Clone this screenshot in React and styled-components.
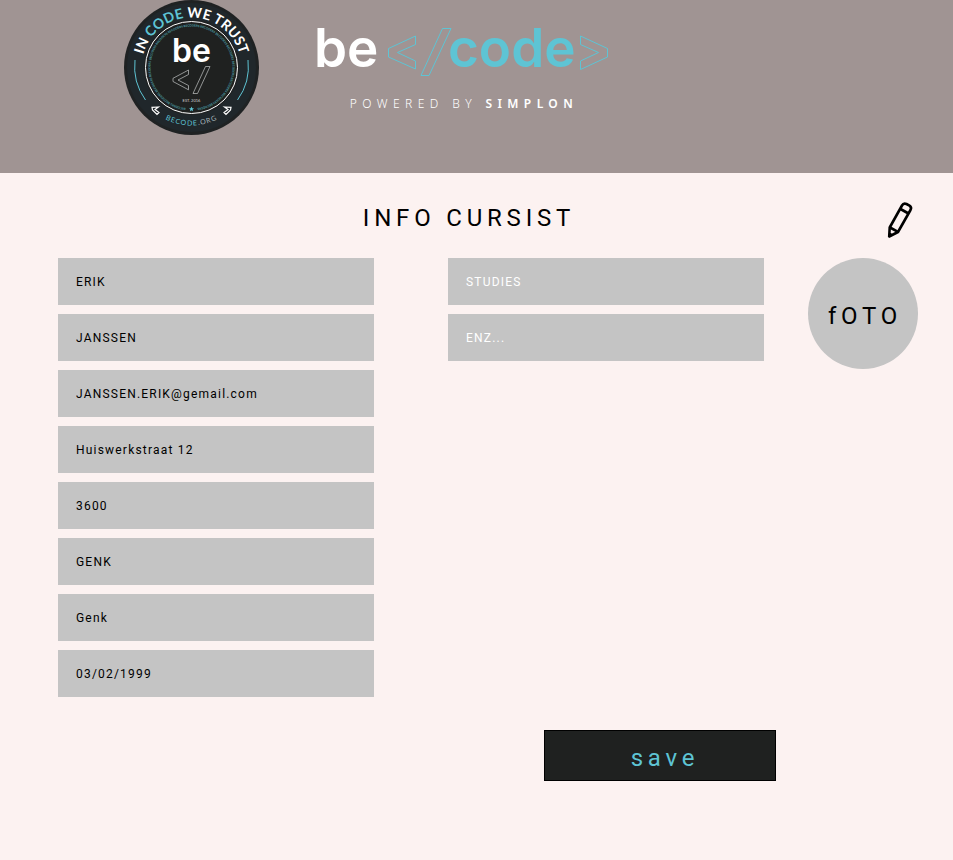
import React from "react";
import styled, { createGlobalStyle } from "styled-components";

const GlobalStyle = createGlobalStyle`
  *, *::before, *::after { box-sizing: border-box; }
  body {
    margin: 0;
    background: #fcf2f1;
    color: #000;
    font-family: Roboto, "Liberation Sans", sans-serif;
  }
`;

const teal = "#5ec4d4";
const ink = "#1f2120";

const Header = styled.header`
  display: flex;
  align-items: flex-start;
  gap: 57px;
  padding: 0 124px 38px;
  background: #a09493;
`;

const BadgeArt = styled.svg`
  display: block;
  flex: none;
  width: 135px;
  height: 135px;
  font-family: Lato, sans-serif;
`;

const Brand = styled.div`
  display: flex;
  flex-direction: column;
  align-items: center;
  padding-top: 14px;
`;

const WordmarkArt = styled.svg`
  display: block;
  width: 294px;
  height: 68px;
  font-family: Inter, sans-serif;
`;

const Tagline = styled.p`
  margin: 12px 0 0;
  padding-left: 2px;
  color: #fff;
  font-family: "Noto Sans", sans-serif;
  font-size: 12px;
  font-weight: 300;
  line-height: 20px;
  letter-spacing: 0.45em;
  white-space: nowrap;

  strong { font-weight: 600; }
`;

const Main = styled.main`
  padding: 28px 35px 79px 58px;
`;

const TitleRow = styled.div`
  display: flex;
  align-items: flex-start;
  gap: 6px;
`;

const Title = styled.h1`
  flex: 1;
  margin: 0;
  font-size: 24px;
  font-weight: 400;
  line-height: 34px;
  letter-spacing: 0.2em;
  text-align: center;
`;

const IconButton = styled.button`
  display: block;
  padding: 0;
  border: 0;
  background: none;
  cursor: pointer;

  svg { display: block; }
`;

const Form = styled.form`
  margin-top: 19px;
`;

const FormBody = styled.div`
  display: flex;
  align-items: flex-start;
  gap: 44px;
`;

const Columns = styled.div`
  flex: 1;
  display: grid;
  grid-template-columns: repeat(2, minmax(0, 1fr));
  align-items: start;
  gap: 74px;
`;

const Column = styled.div`
  display: grid;
  gap: 9px;
`;

const Field = styled.input`
  width: 100%;
  height: 47px;
  padding: 0 18px;
  border: 0;
  border-radius: 0;
  background: #c4c4c4;
  color: #000;
  font-family: inherit;
  font-size: 12px;
  letter-spacing: 0.1em;

  &::placeholder { color: #fff; opacity: 1; }
`;

const Photo = styled.button`
  flex: none;
  width: 110px;
  height: 111px;
  padding: 4px 0 0 4px;
  border: 0;
  border-radius: 50%;
  background: #c4c4c4;
  color: #000;
  font-family: inherit;
  font-size: 24px;
  letter-spacing: 0.2em;
  cursor: pointer;
`;

const Actions = styled.div`
  display: flex;
  justify-content: flex-end;
  margin-top: 33px;
  padding-right: 142px;
`;

const SaveButton = styled.button`
  width: 232px;
  height: 51px;
  padding: 4px 0 0 10px;
  border: 1px solid #000;
  background: ${ink};
  color: ${teal};
  font-family: inherit;
  font-size: 24px;
  letter-spacing: 0.2em;
  cursor: pointer;
`;

function Badge() {
  return (
    <BadgeArt viewBox="0 0 135 135" role="img" aria-label="BeCode badge">
      <defs>
        <path id="arcTop" d="M17.5 67.5a50 50 0 0 1 100 0" />
        <path id="arcBottom" d="M9.5 67.5a58 58 0 0 0 116 0" />
        <path id="arcRing" d="M67.5 108.5a41 41 0 0 1 0 -82a41 41 0 0 1 0 82" />
      </defs>
      <circle cx="67.5" cy="67.5" r="67.5" fill="#1f2223" />
      <circle cx="67.5" cy="67.5" r="56" fill="none" stroke="#20272b" strokeWidth="17" />
      <circle cx="67.5" cy="67.5" r="46" fill={ink} stroke="#fff" strokeWidth="1" />
      <text fontSize="14" fontWeight="700" fill="#fff" textAnchor="middle">
        <textPath href="#arcTop" startOffset="50%">
          IN <tspan fill={teal}>CODE</tspan> WE TRUST
        </textPath>
      </text>
      <text fontSize="3" fontWeight="700" fill={teal} opacity="0.75" textAnchor="middle">
        <textPath href="#arcRing" startOffset="50%">
          {Array(15).fill("BECODERS").join(" ")}
        </textPath>
      </text>
      <g fill="none" stroke={teal} strokeWidth="1">
        <path d="M11 60A57 57 0 0 0 21.5 100" />
        <path d="M124 60A57 57 0 0 1 113.5 100" />
      </g>
      <text x="67.5" y="62" fontFamily="Inter" fontSize="32" fontWeight="600" fill="#fff" textAnchor="middle">be</text>
      <g fill="none" stroke="#c3c5c5" strokeWidth="0.7">
        <path d="M64.500 70L49 78.300V81.500L64.500 89.800V85.500L54 80L64.500 74.500Z" />
        <path d="M81.500 66.500H86L73.500 93.500H69Z" />
      </g>
      <text x="67.5" y="101.500" fontSize="4" fill="#d5d5d5" textAnchor="middle">EST. 2016</text>
      <path d="M67.500 106.500L68.200 108.200L70 108.300L68.600 109.500L69.100 111.300L67.500 110.300L65.900 111.300L66.400 109.500L65 108.300L66.800 108.200Z" fill={teal} />
      <g fill="none" stroke="#fff" strokeWidth="1.200">
        <path d="M34.500 107L28 107.300L28.500 110L33 114.500L35 112.500L31 109.500Z" />
        <path d="M100.500 107L107 107.300L106.500 110L102 114.500L100 112.500L104 109.500Z" />
      </g>
      <text fontSize="7" fill={teal} textAnchor="middle" letterSpacing="1">
        <textPath href="#arcBottom" startOffset="50%">
          BECODE<tspan fill="#a9b9bd">.ORG</tspan>
        </textPath>
      </text>
    </BadgeArt>
  );
}

function Wordmark() {
  return (
    <WordmarkArt viewBox="0 -2 294 68" role="img" aria-label="be code">
      <text x="-2" y="51" fontSize="53" fontWeight="600" fill="#fff">be</text>
      <text x="132" y="51" fontSize="53" fontWeight="600" fill={teal}>code</text>
      <g fill="none" stroke={teal} strokeWidth="1">
        <path d="M99.500 20L72.500 32.500V41L99.500 53V45L81.500 36.500L99.500 28.500Z" />
        <path d="M126.500 12.500H135L113 59.500H105Z" />
        <path d="M264.500 20L291.500 32.500V41L264.500 53.500V45L282.500 36.500L264.500 28.500Z" />
      </g>
    </WordmarkArt>
  );
}

function PencilIcon() {
  return (
    <svg width="32" height="38" viewBox="0 0 32 38" fill="none" stroke="#000" strokeWidth="2.6" strokeLinejoin="round" aria-hidden="true">
      <path d="M3.200 35.500L3.700 26.500L16 4.500Q17.500 1.700 20.500 3L23.500 4.600Q26 6.200 24.500 9L12 31Z" />
      <path d="M14.500 8L22.500 12.500M4 26.500L12 30.800" />
      <path d="M3.200 36L3.500 32L7 33.800Z" fill="#000" strokeWidth="1" />
    </svg>
  );
}

const personalFields = [
  { name: "firstName", label: "Voornaam", value: "ERIK" },
  { name: "lastName", label: "Achternaam", value: "JANSSEN" },
  { name: "email", label: "E-mail", value: "JANSSEN.ERIK@gemail.com" },
  { name: "street", label: "Straat", value: "Huiswerkstraat 12" },
  { name: "postcode", label: "Postcode", value: "3600" },
  { name: "city", label: "Gemeente", value: "GENK" },
  { name: "campus", label: "Campus", value: "Genk" },
  { name: "birthDate", label: "Geboortedatum", value: "03/02/1999" },
];

const extraFields = [
  { name: "studies", label: "Studies", placeholder: "STUDIES" },
  { name: "other", label: "Enz", placeholder: "ENZ..." },
];

export default function App() {
  return (
    <>
      <GlobalStyle />
      <Header>
        <Badge />
        <Brand>
          <Wordmark />
          <Tagline>
            POWERED BY <strong>SIMPLON</strong>
          </Tagline>
        </Brand>
      </Header>
      <Main>
        <TitleRow>
          <Title>INFO CURSIST</Title>
          <IconButton type="button" aria-label="Bewerken">
            <PencilIcon />
          </IconButton>
        </TitleRow>
        <Form onSubmit={(event) => event.preventDefault()}>
          <FormBody>
            <Columns>
              <Column>
                {personalFields.map((field) => (
                  <Field key={field.name} name={field.name} aria-label={field.label} defaultValue={field.value} />
                ))}
              </Column>
              <Column>
                {extraFields.map((field) => (
                  <Field key={field.name} name={field.name} aria-label={field.label} placeholder={field.placeholder} />
                ))}
              </Column>
            </Columns>
            <Photo type="button">fOTO</Photo>
          </FormBody>
          <Actions>
            <SaveButton type="submit">save</SaveButton>
          </Actions>
        </Form>
      </Main>
    </>
  );
}
